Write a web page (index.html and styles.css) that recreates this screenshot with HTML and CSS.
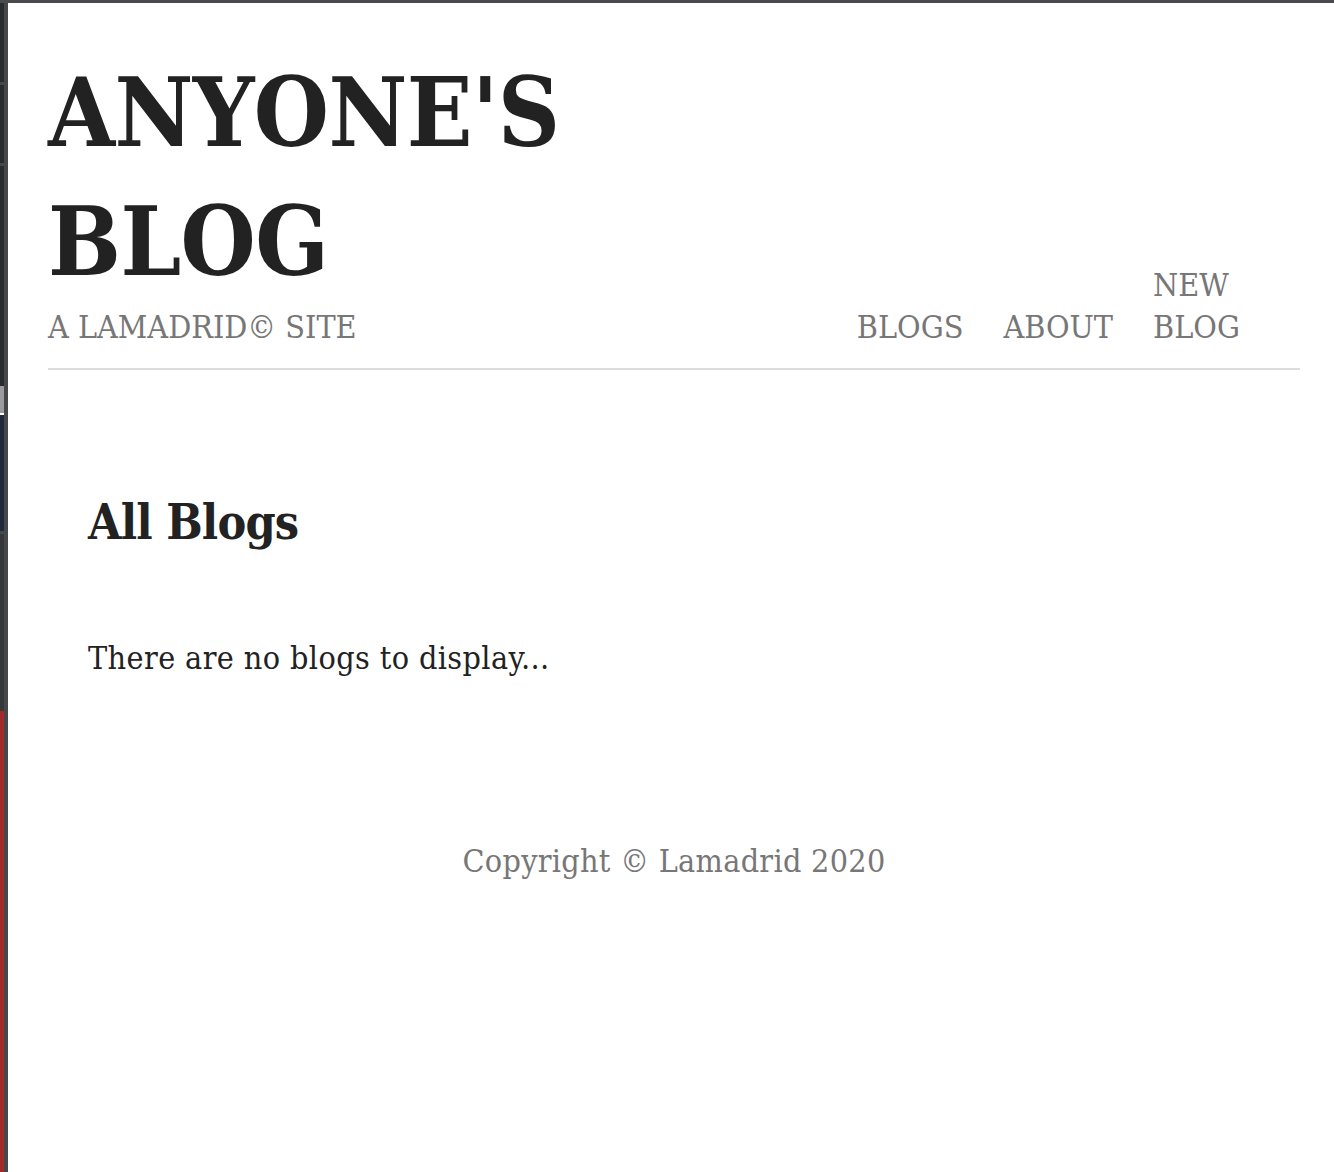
FILE: index.html
```html
<!DOCTYPE html>
<html lang="en">
<head>
<meta charset="utf-8">
<title>Anyone's Blog</title>
<link rel="stylesheet" href="styles.css">
</head>
<body>
<div class="frame">
  <div class="dock">
    <div class="seg seg-a"></div>
    <div class="seg-sep"></div>
    <div class="seg seg-b"></div>
    <div class="seg-sep"></div>
    <div class="seg seg-c"></div>
    <div class="seg seg-light"></div>
    <div class="seg seg-white"></div>
    <div class="seg seg-navy"></div>
    <div class="seg-sep"></div>
    <div class="seg seg-gray"></div>
    <div class="seg seg-red"></div>
  </div>
  <div class="page">
    <header class="masthead">
      <div class="brand">
        <h1 class="site-title">ANYONE'S BLOG</h1>
        <p class="tagline">A LAMADRID© SITE</p>
      </div>
      <nav class="nav">
        <a class="nav-link" href="#">BLOGS</a>
        <a class="nav-link" href="#">ABOUT</a>
        <a class="nav-link nav-narrow" href="#">NEW BLOG</a>
      </nav>
    </header>
    <main class="content">
      <h2 class="heading">All Blogs</h2>
      <p class="empty">There are no blogs to display...</p>
    </main>
    <footer class="footer">Copyright © Lamadrid 2020</footer>
  </div>
</div>
</body>
</html>
```
FILE: styles.css
```css
html, body {
  margin: 0;
  padding: 0;
  height: 100%;
  background: #ffffff;
}
body {
  font-family: "DejaVu Serif Condensed", "DejaVu Serif", "Liberation Serif", serif;
  font-stretch: semi-condensed;
  color: #222222;
}
.frame {
  display: flex;
  min-height: 100%;
  border-top: 3px solid #4a4b4e;
  box-sizing: border-box;
}
.dock {
  width: 4px;
  border-right: 4px solid #46474a;
  display: flex;
  flex-direction: column;
  flex-shrink: 0;
}
.seg-sep { height: 3px; background: #47484b; }
.seg-a { height: 79px; background: #2a2b2e; }
.seg-b { height: 78px; background: #2a2b2e; }
.seg-c { height: 220px; background: #2a2b2e; }
.seg-light { height: 27px; background: #9b9b9b; }
.seg-white { height: 2px; background: #ffffff; }
.seg-navy { height: 116px; background: #1f293a; }
.seg-gray { height: 177px; background: #36373a; }
.seg-red { flex: 1; background: #a3292a; }

.page {
  flex: 1;
  padding: 0 34px 0 40px;
}
.masthead {
  display: flex;
  justify-content: space-between;
  align-items: flex-end;
  border-bottom: 2px solid #dddddd;
  padding-bottom: 20px;
}
.site-title {
  margin: 45px 0 0;
  width: 560px;
  font-size: 96px;
  line-height: 129px;
  font-weight: bold;
  letter-spacing: -0.6px;
  color: #222222;
}
.tagline {
  margin: 0;
  font-size: 32px;
  line-height: 42px;
  color: #777777;
}
.nav {
  display: flex;
  align-items: flex-end;
  gap: 40px;
  padding-right: 57px;
}
.nav-link {
  font-size: 32px;
  line-height: 42px;
  color: #777777;
  text-decoration: none;
}
.nav-narrow { width: 90px; }
.content {
  padding: 122px 40px 0;
}
.heading {
  margin: 0;
  font-size: 48px;
  line-height: 60px;
  font-weight: bold;
  letter-spacing: -0.8px;
}
.empty {
  margin: 85px 0 0;
  font-size: 32px;
  line-height: 42px;
  letter-spacing: 0.4px;
}
.footer {
  text-align: center;
  margin-top: 161px;
  font-size: 32px;
  line-height: 42px;
  letter-spacing: 0.3px;
  color: #777777;
}
```
